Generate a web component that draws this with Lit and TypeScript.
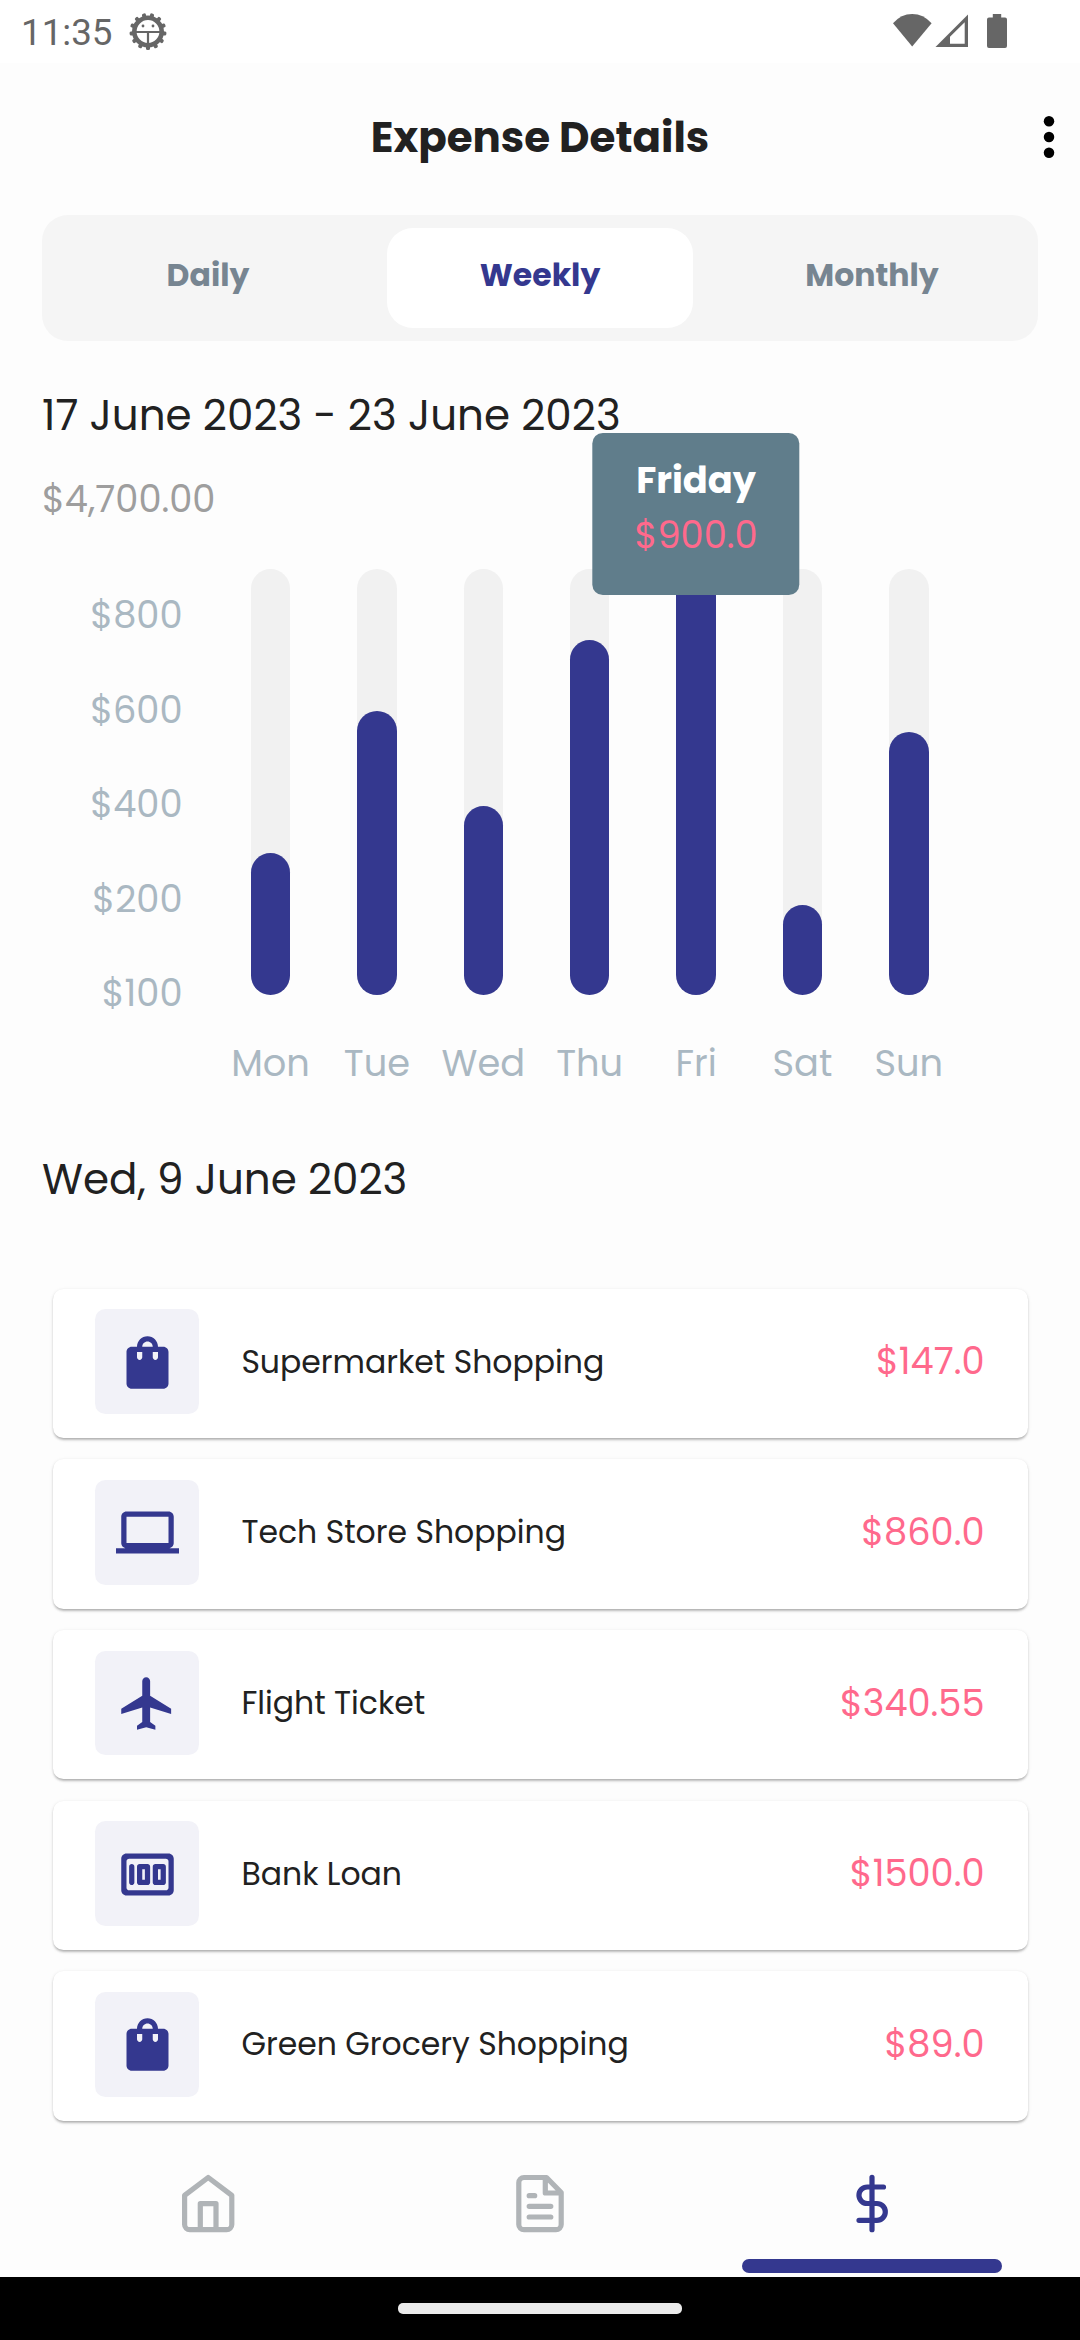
import { LitElement, html, css, svg, nothing } from "lit";
import { customElement, property, state } from "lit/decorators.js";
import { classMap } from "lit/directives/class-map.js";
import { styleMap } from "lit/directives/style-map.js";

type IconName = "bag" | "laptop" | "plane" | "money";

interface Expense {
  icon: IconName;
  name: string;
  amount: string;
}

interface Day {
  label: string;
  value: number;
  tip?: string;
}

const MAX_VALUE = 900;
const TABS = ["Daily", "Weekly", "Monthly"];
const SCALE = ["$800", "$600", "$400", "$200", "$100"];
const DAYS: Day[] = [
  { label: "Mon", value: 300 },
  { label: "Tue", value: 600 },
  { label: "Wed", value: 400 },
  { label: "Thu", value: 750 },
  { label: "Fri", value: 900, tip: "Friday" },
  { label: "Sat", value: 190 },
  { label: "Sun", value: 555 },
];
const EXPENSES: Expense[] = [
  { icon: "bag", name: "Supermarket Shopping", amount: "$147.0" },
  { icon: "laptop", name: "Tech Store Shopping", amount: "$860.0" },
  { icon: "plane", name: "Flight Ticket", amount: "$340.55" },
  { icon: "money", name: "Bank Loan", amount: "$1500.0" },
  { icon: "bag", name: "Green Grocery Shopping", amount: "$89.0" },
];

const ICONS = {
  bag: svg`<path d="M18 6h-2c0-2.21-1.79-4-4-4S8 3.79 8 6H6c-1.1 0-2 .9-2 2v12c0 1.1.9 2 2 2h12c1.1 0 2-.9 2-2V8c0-1.1-.9-2-2-2zm-8 4c0 .55-.45 1-1 1s-1-.45-1-1V8h2v2zm2-6c1.1 0 2 .9 2 2h-4c0-1.1.9-2 2-2zm4 6c0 .55-.45 1-1 1s-1-.45-1-1V8h2v2z"/>`,
  laptop: svg`<path d="M20 18c1.1 0 1.99-.9 1.99-2L22 6c0-1.1-.9-2-2-2H4c-1.1 0-2 .9-2 2v10c0 1.1.9 2 2 2H0v2h24v-2h-4zM4 6h16v10H4V6z"/>`,
  plane: svg`<path d="M21 16v-2l-8-5V3.5c0-.83-.67-1.5-1.5-1.5S10 2.67 10 3.5V9l-8 5v2l8-2.5V19l-2 1.5V22l3.5-1 3.5 1v-1.5L13 19v-5.5l8 2.5z"/>`,
  money: svg`<path fill-rule="evenodd" d="M4 4h16c1.1 0 2 .9 2 2v12c0 1.1-.9 2-2 2H4c-1.1 0-2-.9-2-2V6c0-1.1.9-2 2-2zm1 2c-.55 0-1 .45-1 1v10c0 .55.45 1 1 1h14c.55 0 1-.45 1-1V7c0-.55-.45-1-1-1H5zM6 8c.55 0 1 .45 1 1v6c0 .55-.45 1-1 1s-1-.45-1-1V9c0-.55.45-1 1-1zm3 0h3c.55 0 1 .45 1 1v6c0 .55-.45 1-1 1H9c-.55 0-1-.45-1-1V9c0-.55.45-1 1-1zm1 2v4h1v-4h-1zm5-2h3c.55 0 1 .45 1 1v6c0 .55-.45 1-1 1h-3c-.55 0-1-.45-1-1V9c0-.55.45-1 1-1zm1 2v4h1v-4h-1z"/>`,
};

@customElement("status-bar")
export class StatusBar extends LitElement {
  static styles = css`
    :host {
      display: flex;
      height: 62.5px;
      background: #fff;
      color: #666;
      font: 400 36.75px/50px Roboto, sans-serif;
      box-sizing: border-box;
      padding: 8px 70px 0 21px;
    }
    .time { flex: none; width: 106px; }
    .fill { fill: currentColor; }
    .spacer { flex: 1; }
    .debug { display: block; flex: none; width: 42px; height: 42px; margin-top: 3px; }
    .signals { display: block; flex: none; width: 124px; height: 42px; margin-top: 2px; }
  `;

  render() {
    const teeth = Array.from({ length: 13 }, (_, i) => 180 + (i * 360) / 13);
    return html`
      <span class="time">11:35</span>
      <svg class="debug" viewBox="127 11 42 42">
        <g class="fill">
          ${teeth.map(
            (a) => svg`<rect x="146" y="13" width="4" height="6" rx="1.5" transform="rotate(${a} 148 31.5)" />`
          )}
        </g>
        <circle cx="148" cy="31.5" r="13.7" fill="none" stroke="currentColor" stroke-width="4.6" />
        <path d="M136 32H160M148 32V45" fill="none" stroke="currentColor" stroke-width="2.2" />
        <circle class="fill" cx="143" cy="26" r="1.4" />
        <circle class="fill" cx="153" cy="26" r="1.4" />
      </svg>
      <span class="spacer"></span>
      <svg class="signals" viewBox="885 10 124 42">
        <path class="fill" d="M911.2 46.5 892 23.3Q900 14 911.2 14T930.6 23.3Z" />
        <path class="fill" fill-rule="evenodd" d="M934.5 47 967 14.5V47ZM949 36.8V43.7H963.7V22.3Z" />
        <path class="fill" d="M991.8 14h8.4v3.6h3.8q2 0 2 2V46q0 2-2 2h-16q-2 0-2-2V19.6q0-2 2-2h3.8z" />
      </svg>
    `;
  }
}

@customElement("period-tabs")
export class PeriodTabs extends LitElement {
  @state() private selected = "Weekly";

  static styles = css`
    :host {
      display: grid;
      grid-template-columns: repeat(3, 1fr);
      height: 126px;
      padding: 13px 0;
      box-sizing: border-box;
      border-radius: 26px;
      background: #f5f5f5;
    }
    .tab {
      margin: 0 13px;
      padding: 0 0 6px;
      border: 0;
      border-radius: 26px;
      background: none;
      color: #778591;
      font: 700 31.5px/44px Poppins, Inter, sans-serif;
    }
    .tab.on { background: #fff; color: #34388f; }
  `;

  render() {
    return TABS.map(
      (t) => html`<button
        class=${classMap({ tab: true, on: t === this.selected })}
        @click=${() => (this.selected = t)}
      >${t}</button>`
    );
  }
}

@customElement("week-chart")
export class WeekChart extends LitElement {
  static styles = css`
    :host {
      display: flex;
      height: 522px;
      color: #aab8c2;
      font: 400 36.75px/50px Poppins, Inter, sans-serif;
    }
    .scale {
      width: 140.5px;
      margin: -1.3px 34.8px 0 0;
      text-align: right;
    }
    .mark { height: 94.6px; line-height: 94.6px; }
    .day {
      position: relative;
      width: 106.4px;
      display: flex;
      flex-direction: column;
      align-items: center;
      gap: 43px;
    }
    .track {
      display: flex;
      align-items: flex-end;
      width: 39.4px;
      height: 425.7px;
      border-radius: 20px;
      background: #f1f1f1;
    }
    .bar { width: 100%; border-radius: 20px; background: #34388f; }
    .label { white-space: nowrap; }
    .tip {
      position: absolute;
      z-index: 1;
      left: 50%;
      top: -136.3px;
      transform: translateX(-50%);
      width: 207.4px;
      height: 162.5px;
      box-sizing: border-box;
      padding-top: 20.3px;
      border-radius: 10.5px;
      background: #607d8b;
      text-align: center;
      line-height: 55px;
    }
    .tip-day { display: block; color: #fff; font-weight: 700; }
    .tip-value { color: #ff698c; }
  `;

  render() {
    return html`
      <div class="scale">${SCALE.map((s) => html`<div class="mark">${s}</div>`)}</div>
      ${DAYS.map(
        (d) => html`
          <div class="day">
            <div class="track">
              <div class="bar" style=${styleMap({ height: `${(d.value / MAX_VALUE) * 100}%` })}></div>
            </div>
            <div class="label">${d.label}</div>
            ${d.tip
              ? html`<div class="tip">
                  <span class="tip-day">${d.tip}</span>
                  <span class="tip-value">$${d.value.toFixed(1)}</span>
                </div>`
              : nothing}
          </div>
        `
      )}
    `;
  }
}

@customElement("expense-card")
export class ExpenseCard extends LitElement {
  @property({ attribute: false }) item!: Expense;

  static styles = css`
    :host {
      display: flex;
      align-items: center;
      height: 149.4px;
      box-sizing: border-box;
      padding: 0 43px 3.4px 42.2px;
      border-radius: 10.5px;
      background: #fff;
      box-shadow: 0 2.6px 2.6px -1px rgba(0, 0, 0, 0.2), 0 1px 2.6px rgba(0, 0, 0, 0.13),
        0 1px 5px rgba(0, 0, 0, 0.05);
      font-family: Poppins, Inter, sans-serif;
    }
    .tile {
      display: grid;
      place-items: center;
      width: 104.7px;
      height: 104.7px;
      margin-right: 42px;
      border-radius: 10.5px;
      background: #f2f2f8;
    }
    .icon { display: block; width: 63px; height: 63px; margin-top: 1px; fill: #34388f; }
    .name { flex: 1; color: #212121; font-size: 31.5px; line-height: 44px; }
    .amount { color: #ff698c; font-size: 36.75px; line-height: 50px; margin-top: -1px; }
  `;

  render() {
    return html`
      <div class="tile"><svg class="icon" viewBox="0 0 24 24">${ICONS[this.item.icon]}</svg></div>
      <div class="name">${this.item.name}</div>
      <div class="amount">${this.item.amount}</div>
    `;
  }
}

@customElement("bottom-nav")
export class BottomNav extends LitElement {
  static styles = css`
    :host {
      display: grid;
      grid-template-columns: repeat(3, 1fr);
      height: 156px;
      padding: 0 42px;
      color: #b0b4b7;
    }
    .item {
      display: flex;
      flex-direction: column;
      align-items: center;
      padding-top: 51px;
    }
    .item.on { color: #34388f; }
    .icon {
      display: block;
      width: 58px;
      height: 63px;
      fill: none;
      stroke: currentColor;
      stroke-width: 5.2px;
      stroke-linecap: round;
      stroke-linejoin: round;
    }
    .marker {
      width: 259.5px;
      height: 14px;
      margin-top: 24px;
      border-radius: 7px;
      background: #34388f;
    }
  `;

  render() {
    return html`
      <div class="item">
        <svg class="icon" viewBox="0 0 58 63">
          <path d="M5.6 23.3 29.2 5.5 52.8 23.3V52.5a5.2 5.2 0 0 1-5.2 5.2H10.8a5.2 5.2 0 0 1-5.2-5.2ZM21.3 57.7V31.6H37V57.7" />
        </svg>
      </div>
      <div class="item">
        <svg class="icon" viewBox="0 0 58 63">
          <path d="M13 5.5H35.5L50.2 20.5V52.5a5.2 5.2 0 0 1-5.2 5.2H13a5.2 5.2 0 0 1-5.2-5.2V10.7A5.2 5.2 0 0 1 13 5.5ZM34.3 5.5V21H50.2M18.2 23.7H23.7M18.2 34.3H39.8M18.2 45H39.8" />
        </svg>
      </div>
      <div class="item on">
        <svg class="icon" viewBox="0 0 58 63">
          <path d="M29 5.3V57.7M40.5 15H24.2a8.2 8.2 0 0 0 0 16.500H33.9a8.4 8.4 0 0 1 0 16.800H16" />
        </svg>
        <div class="marker"></div>
      </div>
    `;
  }
}

@customElement("app-root")
export class AppRoot extends LitElement {
  static styles = css`
    :host {
      display: flex;
      flex-direction: column;
      height: 2340px;
      background: #fdfdfd;
      color: #212121;
      font-family: Poppins, Inter, sans-serif;
    }
    .header {
      display: grid;
      grid-template-columns: 64px 1fr 64px;
      align-items: center;
      height: 152.5px;
      box-sizing: border-box;
      padding-bottom: 2px;
    }
    .title {
      grid-column: 2;
      margin: 0;
      text-align: center;
      font-size: 42px;
      font-weight: 700;
      line-height: 60px;
    }
    .menu { display: block; width: 16px; height: 48px; justify-self: center; margin: -2px -1.4px 0 0; }
    .main { display: flex; flex-direction: column; padding: 0 42px; }
    .heading { margin: 0; font-size: 42px; font-weight: 400; line-height: 60px; }
    .range { margin-top: 45.1px; }
    .total { margin-top: 28px; font-size: 36.75px; line-height: 50px; color: #9e9e9e; }
    .chart { margin-top: 45.2px; }
    .date { margin-top: 58.5px; }
    .list { display: flex; flex-direction: column; gap: 21.3px; margin: 78.9px 10.5px 0; }
    .system {
      display: grid;
      place-items: center;
      height: 63px;
      background: #000;
    }
    .pill { width: 284px; height: 11px; border-radius: 5px; background: #ebebeb; }
  `;

  render() {
    return html`
      <status-bar></status-bar>
      <div class="header">
        <h1 class="title">Expense Details</h1>
        <svg class="menu" viewBox="0 0 16 48">
          <circle cx="8" cy="8.3" r="5.25" />
          <circle cx="8" cy="24" r="5.25" />
          <circle cx="8" cy="39.7" r="5.25" />
        </svg>
      </div>
      <div class="main">
        <period-tabs></period-tabs>
        <h2 class="heading range">17 June 2023 - 23 June 2023</h2>
        <div class="total">$4,700.00</div>
        <week-chart class="chart"></week-chart>
        <h2 class="heading date">Wed, 9 June 2023</h2>
        <div class="list">
          ${EXPENSES.map((e) => html`<expense-card .item=${e}></expense-card>`)}
        </div>
      </div>
      <bottom-nav></bottom-nav>
      <div class="system"><div class="pill"></div></div>
    `;
  }
}
